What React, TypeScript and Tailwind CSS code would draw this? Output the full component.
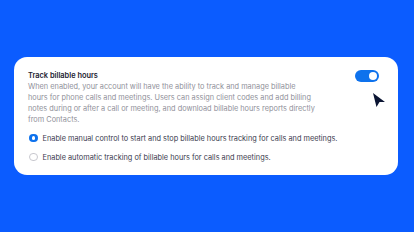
export default function App() {
  return (
    <div
      className="w-[414px] h-[232px] bg-[#0b5cff] flex items-start pt-[57px] px-[14px]"
      style={{ fontFamily: 'Inter, "Liberation Sans", sans-serif' }}
    >
      <div className="relative w-[384px] bg-white rounded-[13px] pt-[13px] pb-[12px] pl-[14px] pr-[14px]">
        <div className="text-[7.4px] leading-[11px] font-semibold text-[#232333]">Track billable hours</div>
        <div className="text-[7.35px] leading-[11px] text-[#8f8f99]">
          When enabled, your account will have the ability to track and manage billable
          <br />
          hours for phone calls and meetings. Users can assign client codes and add billing
          <br />
          notes during or after a call or meeting, and download billable hours reports directly
          <br />
          from Contacts.
        </div>

        <div className="mt-[7px] flex flex-col gap-[7px] pl-[1px]">
          <label className="flex items-center gap-[5px] h-[12px]">
            <span className="w-[8.5px] h-[8.5px] rounded-full bg-[#0e72ed] flex items-center justify-center">
              <span className="w-[3.5px] h-[3.5px] rounded-full bg-white" />
            </span>
            <span className="text-[7.35px] leading-[11px] text-[#39394d]">
              Enable manual control to start and stop billable hours tracking for calls and meetings.
            </span>
          </label>
          <label className="flex items-center gap-[5px] h-[12px]">
            <span className="w-[8.5px] h-[8.5px] rounded-full border border-[#c8c8cf] bg-white" />
            <span className="text-[7.35px] leading-[11px] text-[#39394d]">
              Enable automatic tracking of billable hours for calls and meetings.
            </span>
          </label>
        </div>

        {/* toggle */}
        <div className="absolute top-[13px] right-[19px] w-[24px] h-[12px] rounded-full bg-[#0e72ed] flex items-center justify-end pr-[2px]">
          <span className="w-[8px] h-[8px] rounded-full bg-white" />
        </div>

        {/* cursor */}
        <svg
          className="absolute top-[35px] left-[358px]"
          width="14"
          height="16"
          viewBox="0 0 14 16"
        >
          <path d="M1 1 L13 10 L7.5 10 L4.5 15 Z" fill="#0b1533" />
        </svg>
      </div>
    </div>
  )
}
